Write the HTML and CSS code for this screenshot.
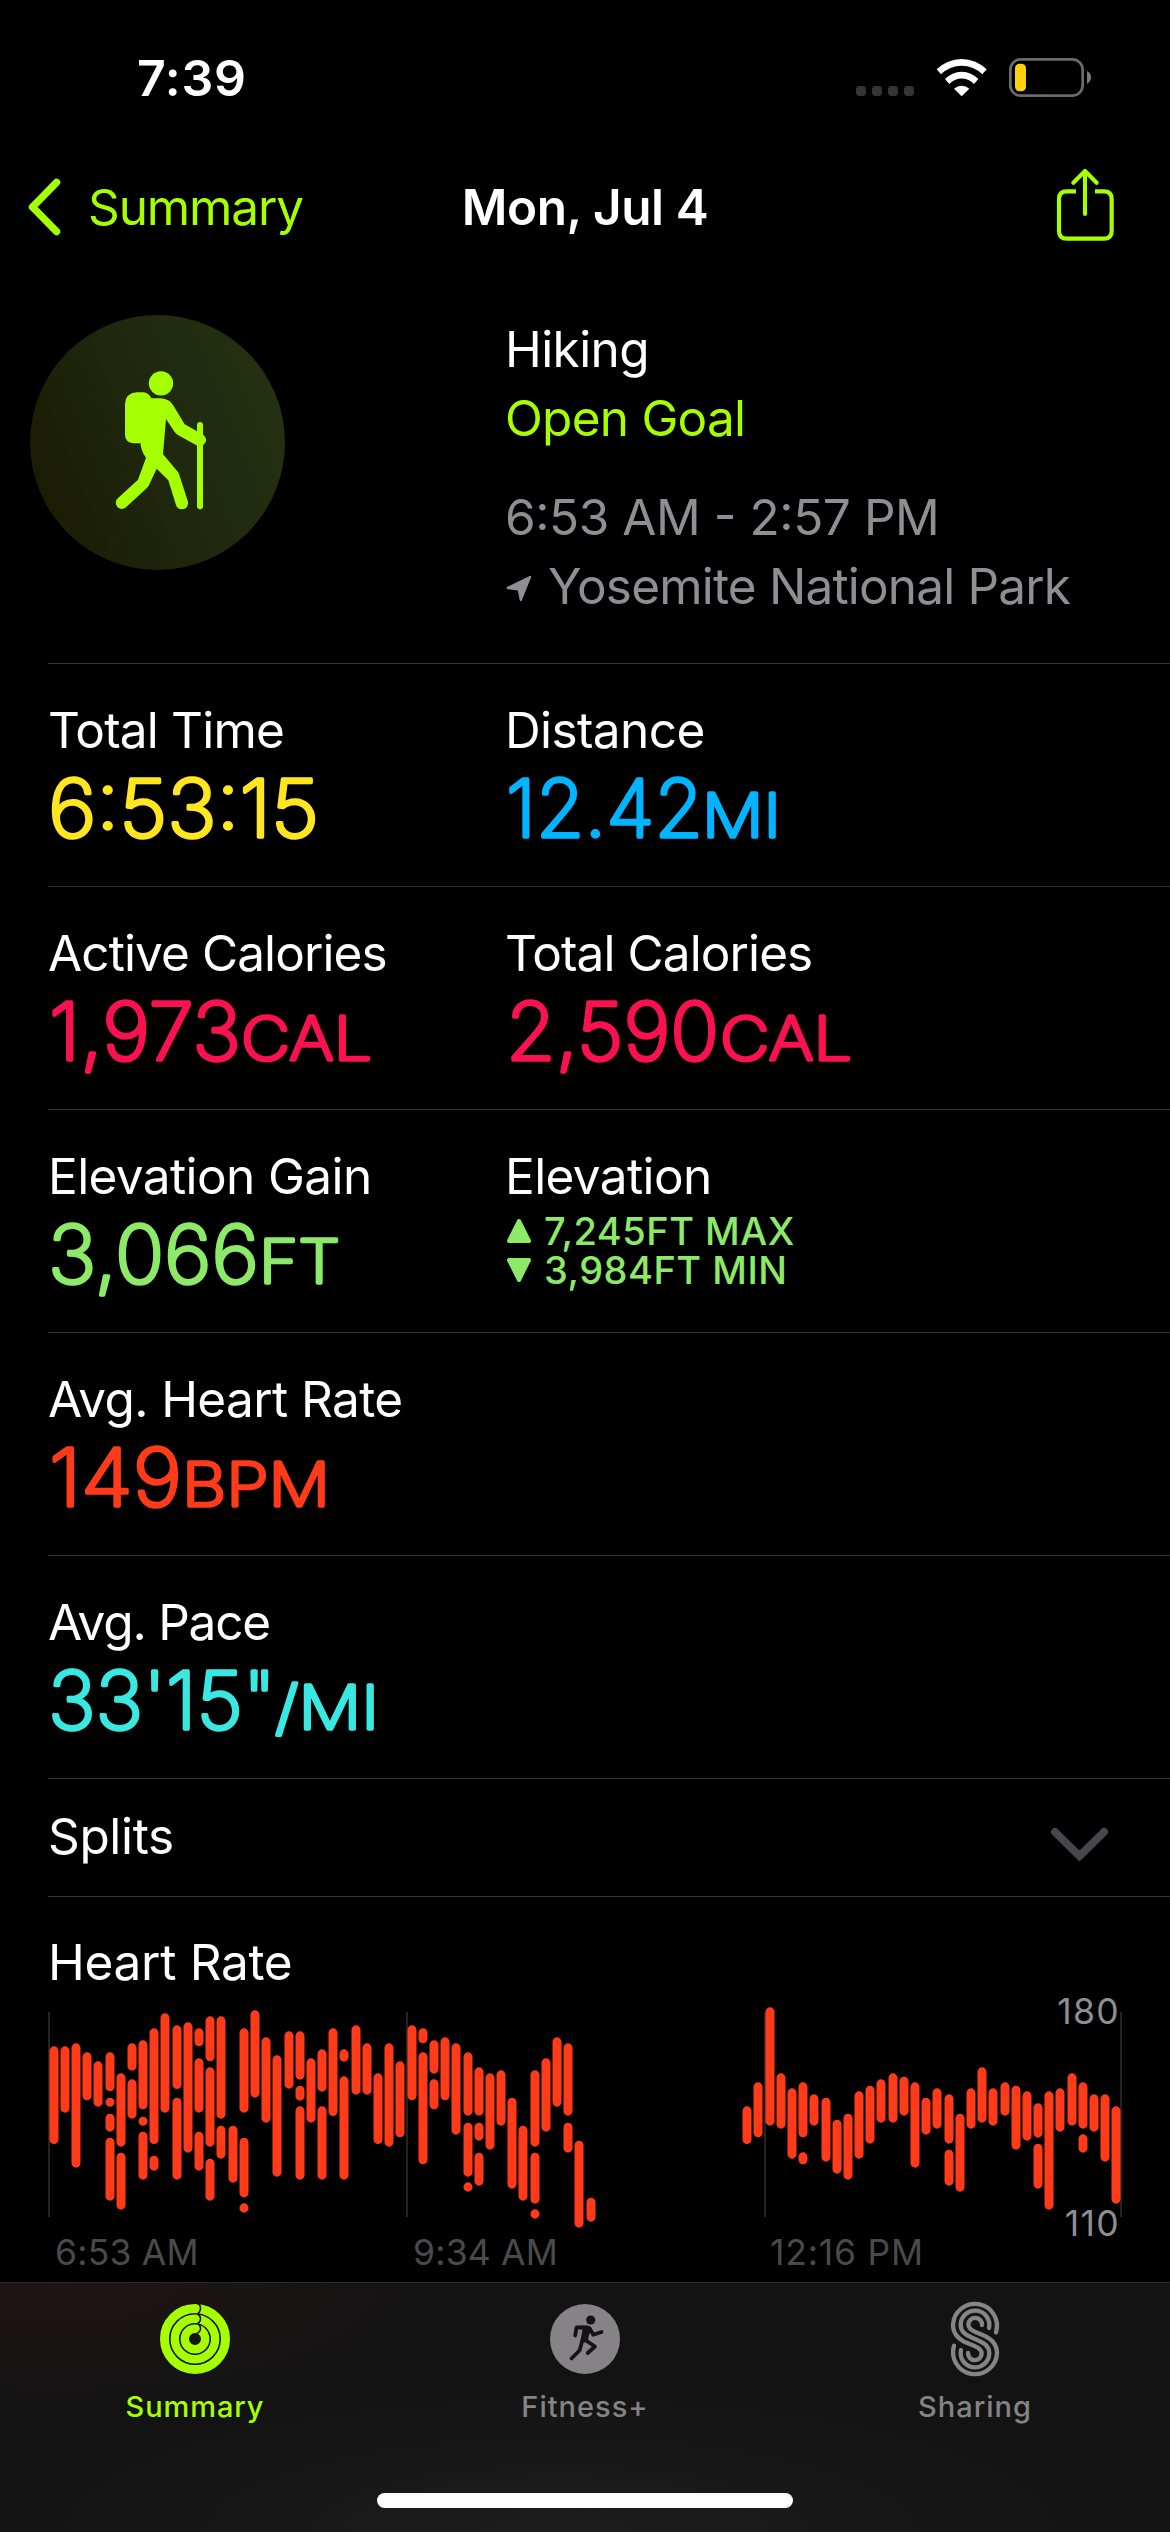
FILE: index.html
```
<!DOCTYPE html>
<html lang="en">
<head>
<meta charset="utf-8">
<title>Hiking workout</title>
<link rel="stylesheet" href="styles.css">
</head>
<body>
<div class="status">
  <span class="time">7:39</span>
  <div class="status-icons">
    <svg class="dots" viewBox="0 0 58 10"><rect width="10" height="10" rx="3.4"/><rect x="16" width="10" height="10" rx="3.4"/><rect x="32" width="10" height="10" rx="3.4"/><rect x="48" width="10" height="10" rx="3.4"/></svg>
    <svg class="wifi" viewBox="288 54 153 117"><path d="M290 88A107 107 0 0 1 440 88L427 103A88 88 0 0 0 303 103ZM315 117A69 69 0 0 1 415 117L402 132A50 50 0 0 0 328 132ZM342 146A34 34 0 0 1 388 146L365 169Z"/></svg>
    <svg class="battery" viewBox="507 54 249 117"><rect class="shell" x="511" y="58" width="217" height="109" rx="31"/><path class="nub" d="M741 93Q753 99 753 112Q753 125 741 131Z"/><rect class="charge" x="525" y="71" width="33" height="83" rx="14"/></svg>
  </div>
</div>

<header class="nav">
  <a class="back"><svg viewBox="0 0 34 58"><path d="M29.500 4.500L5.500 29L29.500 53.500"/></svg><span>Summary</span></a>
  <h1>Mon, Jul 4</h1>
  <svg class="share" viewBox="651 384 171 222"><path d="M708 454H680Q657 454 657 477V573Q657 596 680 596H792Q815 596 815 573V477Q815 454 792 454H765"/><path class="arrow" d="M735 522V393M700 428L735 393L770 428"/></svg>
</header>

<main>
  <section class="hero">
    <svg class="badge" viewBox="90 74 765 765">
      <defs><linearGradient id="olive" x1="0" y1=".7" x2="1" y2=".3"><stop offset="0" stop-color="#1a1b03"/><stop offset=".5" stop-color="#1f280e"/><stop offset="1" stop-color="#253112"/></linearGradient></defs>
      <circle cx="472.500" cy="456.500" r="382.500" fill="url(#olive)"/>
      <g class="hiker">
        <circle cx="483" cy="279" r="36.500"/>
        <path d="M410 306H430Q446 307 454 324V459H400Q376 457 375 434V340Q377 309 410 306Z"/>
        <path d="M440 324H483Q508 326 519 344L554 402L606 431Q622 441 617 455Q608 471 592 466L535 435Q528 431 524 425L498 386L489 492L532 543Q536 547 538 554L564 634Q566 654 547 657Q533 658 528 644L505 570L470 535L446 586Q443 591 438 595L378 651Q365 661 353 651Q343 640 351 626L414 568L438 502Q422 484 421 450Z"/>
        <path class="pole" d="M600 404V648"/>
      </g>
    </svg>
    <div class="facts">
      <p class="kind">Hiking</p>
      <p class="goal">Open Goal</p>
      <p class="when">6:53 AM - 2:57 PM</p>
      <p class="where"><svg viewBox="0 0 26 27"><path d="M24.200 .7Q25.600 .6 25.100 2.200L15.800 25.500Q14.700 27.200 13.700 25.200L11.800 15.400L1.600 14.300Q-.4 13.300 1.200 11.800Z"/></svg><span>Yosemite National Park</span></p>
    </div>
  </section>

  <section class="row">
    <div class="metric yellow"><h2 class="l-tt">Total Time</h2>
      <svg class="value"><text x="0" y="76.500" textLength="271" lengthAdjust="spacingAndGlyphs">6:53:15</text></svg></div>
    <div class="metric blue"><h2 class="l-di">Distance</h2>
      <svg class="value"><text x="1" y="76.500" textLength="197" lengthAdjust="spacingAndGlyphs">12.42</text><text class="unit" x="197" y="76.500" textLength="79" lengthAdjust="spacingAndGlyphs">MI</text></svg></div>
  </section>
  <section class="row">
    <div class="metric pink"><h2 class="l-ca">Active Calories</h2>
      <svg class="value"><text x="1" y="76.500" textLength="192" lengthAdjust="spacingAndGlyphs">1,973</text><text class="unit" x="193" y="76.500" textLength="131" lengthAdjust="spacingAndGlyphs">CAL</text></svg></div>
    <div class="metric pink"><h2 class="l-ca">Total Calories</h2>
      <svg class="value"><text x="1" y="76.500" textLength="213" lengthAdjust="spacingAndGlyphs">2,590</text><text class="unit" x="215" y="76.500" textLength="132" lengthAdjust="spacingAndGlyphs">CAL</text></svg></div>
  </section>
  <section class="row">
    <div class="metric green"><h2 class="l-di">Elevation Gain</h2>
      <svg class="value"><text x="0" y="76.500" textLength="211" lengthAdjust="spacingAndGlyphs">3,066</text><text class="unit" x="211" y="76.500" textLength="81" lengthAdjust="spacingAndGlyphs">FT</text></svg></div>
    <div class="metric green"><h2 class="l-di">Elevation</h2>
      <div class="range">
        <p><svg viewBox="0 0 27 26"><path d="M14 3L24 23H4Z"/></svg>7,245FT MAX</p>
        <p><svg viewBox="0 0 27 26"><path d="M4 3H24L14 23Z"/></svg>3,984FT MIN</p>
      </div></div>
  </section>
  <section class="row">
    <div class="metric red"><h2 class="l-hr">Avg. Heart Rate</h2>
      <svg class="value"><text x="1" y="76.500" textLength="133" lengthAdjust="spacingAndGlyphs">149</text><text class="unit" x="134" y="76.500" textLength="148" lengthAdjust="spacingAndGlyphs">BPM</text></svg></div>
  </section>
  <section class="row">
    <div class="metric teal"><h2 class="l-pa">Avg. Pace</h2>
      <svg class="value"><text x="0" y="76.500" textLength="228" lengthAdjust="spacingAndGlyphs">33'15"</text><text class="unit" x="227" y="76.500" textLength="104" lengthAdjust="spacingAndGlyphs">/MI</text></svg></div>
  </section>

  <section class="splits"><h2>Splits</h2><svg viewBox="0 0 57 34"><path d="M4 4L28.500 28L53 4"/></svg></section>

  <section class="heart">
    <h2>Heart Rate</h2>
    <div class="chart">
      <svg id="chart" viewBox="0 6 3510 720"><path class="grid" d="M147 66V681M1221 66V681M2295 66V681M3363 66V681"/><path class="bars" id="bars"/></svg>
      <span class="max">180</span><span class="min">110</span>
    </div>
    <div class="times"><span>6:53 AM</span><span>9:34 AM</span><span class="noon">12:16 PM</span></div>
  </section>
</main>

<footer class="tabbar">
  <nav class="tabs">
    <a class="tab active">
      <svg viewBox="-40 -40 80 80"><g class="rings"><circle r="30.500" stroke-width="9"/><circle r="20.200" stroke-width="8.400"/><circle r="10.200" stroke-width="8.400"/></g>
        <path class="cuts" d="M1.500 -36Q5.500 -34.500 5.500 -31Q5.500 -27 2.500 -25Q5.500 -23.500 5.500 -20.200Q5.500 -17 2.500 -15.300Q5.500 -13.500 5.500 -10.500Q5.500 -7 1.500 -5.500"/></svg>
      <span>Summary</span></a>
    <a class="tab">
      <svg viewBox="-40 -40 80 80"><circle class="disc" r="35"/>
        <g class="runner"><circle cx="5.700" cy="-19" r="4.600"/><path d="M-6.500 -13.300H2Q5.500 -13 6.500 -10L4 -4L2.500 3L-5 4L-2.500 -9.500Z"/>
        <path class="limb" d="M-9.800 -3.500L-8.500 -11.500H1.500Q4.500 -11.500 5.500 -9L8.300 -4.300L16.500 -7"/><path class="limb" d="M1 1.500L10 7.500L2.700 14"/><path class="limb" d="M-2.500 1L-5.500 11.500L-13.500 19.500"/></g></svg>
      <span class="fit">Fitness+</span></a>
    <a class="tab">
      <svg viewBox="223 88 240 240"><path class="ess" d="M406 188A66 66 0 1 0 277 165C277 195 295 210 320 220L340 228C355 234 363 241 363 252A20.500 20.500 0 0 1 322 250M385 175A43 43 0 1 0 300 165C300 187 315 196 343 208C371 220 386 229 386 251A43 43 0 1 1 301 241M280 228A66 66 0 1 0 409 251C409 221 391 206 366 196L346 188C331 182 323 175 323 164A20.500 20.500 0 0 1 364 166"/></svg>
      <span class="fit">Sharing</span></a>
  </nav>
  <div class="home"></div>
</footer>
<script src="chart.js"></script>
</body>
</html>
```
FILE: styles.css
```
* { box-sizing: border-box; margin: 0; padding: 0; }
body { width: 1170px; height: 2532px; background: #000; color: #fff; font-family: Inter, "Liberation Sans", sans-serif; font-size: 49.5px; line-height: 60px; overflow: hidden; }
h1, h2 { font-size: inherit; font-weight: 400; }
svg { display: block; flex: none; overflow: visible; }

.status { display: flex; justify-content: space-between; height: 156px; padding: 48px 78px 0 137px; }
.time { font-size: 50px; font-weight: 600; letter-spacing: .7px; }
.status-icons { display: flex; align-items: flex-end; gap: 22px; height: 49px; }
.dots { width: 58px; height: 10px; margin-bottom: 1px; fill: #353535; }
.wifi { width: 51px; height: 39px; fill: #fff; }
.battery { width: 83px; height: 39px; }
.shell { fill: none; stroke: #6b6b6b; stroke-width: 8; }
.nub { fill: #7a7a7a; }
.charge { fill: #ffd10a; }

.nav { display: grid; grid-template-columns: 1fr auto 1fr; align-items: center; height: 102px; padding: 0 56px 0 27px; }
.back { display: flex; align-items: center; gap: 27px; color: #a6ff00; letter-spacing: -1.1px; }
.back svg { width: 34px; height: 58px; fill: none; stroke: #a6ff00; stroke-width: 7.5; stroke-linecap: round; stroke-linejoin: round; }
.nav h1 { font-weight: 600; letter-spacing: -.42px; margin-left: 29px; }
.share { width: 57px; height: 74px; margin-top: -4px; justify-self: end; fill: none; stroke: #a6ff00; stroke-width: 12.5; }
.arrow { stroke-linecap: round; stroke-linejoin: round; }

.hero { display: flex; height: 406px; padding: 57px 0 0 30px; position: relative; }
.hero::after, .row::after, .splits::after { content: ""; position: absolute; left: 48px; right: 0; bottom: 0; height: 1px; background: #343436; }
.badge { width: 255px; height: 255px; }
.hiker { fill: #a6ff00; }
.pole { stroke: #a6ff00; stroke-width: 18; stroke-linecap: round; }
.facts { margin-left: 220px; line-height: 69px; color: #8e8e93; }
.kind { color: #fff; letter-spacing: -.6px; }
.goal { color: #a6ff00; letter-spacing: -.76px; }
.when { margin-top: 30px; letter-spacing: -.44px; font-feature-settings: "case"; }
.where { display: flex; align-items: center; letter-spacing: -.82px; }
.where svg { width: 26px; height: 27px; margin: 4px 16px 0 1px; fill: #8e8e93; }

.row { display: grid; grid-template-columns: 457px 1fr; height: 223px; padding: 36px 0 0 48px; position: relative; }
.row h2 { color: #fff; }
.l-tt { letter-spacing: -.8px; }
.l-di { letter-spacing: -.6px; }
.l-ca { letter-spacing: -.9px; }
.l-hr { letter-spacing: -.6px; }
.l-pa { letter-spacing: -1.2px; }
.value { width: 400px; height: 90px; }
.value text { font-size: 80px; font-weight: 230; fill: currentColor; stroke: currentColor; stroke-width: 3.5px; stroke-linejoin: round; }
.value .unit { font-size: 60px; font-weight: 240; }
.yellow { color: #ffe620; }
.blue { color: #00b4ff; }
.pink { color: #fa114f; }
.green { color: #8de968; }
.red { color: #ff3b1a; }
.teal { color: #38e8e1; }
.range { margin-top: 6px; font-size: 38px; font-weight: 450; line-height: 38.5px; letter-spacing: .5px; }
.range p { display: flex; align-items: center; gap: 12px; }
.range svg { width: 27px; height: 26px; fill: currentColor; stroke: currentColor; stroke-width: 4; stroke-linejoin: round; }

.splits { display: flex; justify-content: space-between; align-items: flex-start; height: 118px; padding: 27px 62px 0 48px; letter-spacing: -.35px; position: relative; }
.splits svg { width: 57px; height: 34px; margin-top: 22px; fill: none; stroke: #48484a; stroke-width: 8; stroke-linecap: round; }

.heart h2 { padding: 35px 0 0 48px; letter-spacing: -.3px; }
.chart { position: relative; height: 240px; }
.chart svg { width: 1170px; height: 240px; fill: none; }
.grid { stroke: #2c2c2e; stroke-width: 5; }
.bars { stroke: #ff3b1a; stroke-width: 27; stroke-linecap: round; }
.max, .min { position: absolute; right: 50px; font-size: 35.5px; line-height: 40px; letter-spacing: 1.3px; color: #8e8e93; }
.max { top: 0; }
.min { top: 212px; }
.times { display: grid; grid-template-columns: 358px 357px 1fr; padding: 1px 0 0 55px; font-size: 35.5px; line-height: 40px; letter-spacing: .2px; color: #4a4a4c; }
.noon { letter-spacing: .8px; }

.tabbar { position: absolute; left: 0; top: 2282px; width: 1170px; height: 250px; border-top: 1px solid #2b2a2b; background: radial-gradient(ellipse 360px 120px at 60px 0, #1e1614, transparent), radial-gradient(ellipse 560px 150px at 560px 250px, #1e1d1e, transparent), #141314; }
.tabs { display: grid; grid-template-columns: repeat(3, 1fr); padding-top: 16px; }
.tab { display: flex; flex-direction: column; align-items: center; gap: 10px; color: #858385; font-size: 29px; font-weight: 500; line-height: 36px; letter-spacing: .9px; }
.tab svg { width: 80px; height: 80px; }
.active { color: #a6ff00; }
.fit { letter-spacing: 1px; }
.rings { fill: none; stroke: #a6ff00; }
.cuts { fill: none; stroke: #171413; stroke-width: 1.5; }
.disc { fill: #858385; }
.runner { fill: #151415; }
.limb { fill: none; stroke: #151415; stroke-width: 3.8; stroke-linecap: round; stroke-linejoin: round; }
.ess { fill: none; stroke: #858585; stroke-width: 13; stroke-linecap: round; }
.home { width: 416px; height: 15px; margin: 68px auto 0; border-radius: 8px; background: #fff; }
```
FILE: chart.js
```
// Heart rate samples: [x, top, bottom, top, bottom, ...] in chart units.
const samples = [
  [162,169,462],[195,169,368],[228,160,533],[261,187,331],[294,214,350],
  [330,187,304,323,350,371,425,443,632],[363,250,470,488,659],[396,160,242,268,386],
  [429,151,358,380,406,425,569],[462,115,462,497,542],[495,70,368],[531,106,297,323,569],
  [564,97,488],[597,115,169,205,368,425,542],[630,79,214,232,470,506,632],[663,79,386,407,506],
  [699,407,578],[732,115,368,443,622,640,668],[765,61,323],[798,142,398],[831,196,560],
  [867,124,296],[900,124,269,287,332,349,569],[933,205,398],[966,178,305,349,569],
  [999,115,378],[1032,178,215,259,569],[1068,106,314],[1101,160,314],[1134,250,462],
  [1167,160,470],[1200,214,442],[1236,106,331],[1269,115,160,187,523],[1302,151,251,268,358],
  [1335,142,331],[1368,160,434],[1404,187,377,398,560,577,605],[1437,232,377,398,452,488,587],
  [1470,250,479],[1503,241,407],[1536,323,596],[1569,407,632],[1605,241,470,488,641,658,686],
  [1638,205,425],[1671,142,350],[1704,160,377,398,488],[1737,452,713],[1773,623,695],
  [2241,349,462],[2274,277,442],[2310,52,407],[2343,250,416],[2376,295,506],[2409,277,442,487,523],
  [2442,313,407],[2478,323,515],[2511,389,551],[2544,371,569],[2577,304,506],[2610,287,461],
  [2643,268,398],[2679,250,398],[2712,260,377],[2745,277,533],[2778,323,434],[2811,295,416],
  [2847,313,461,479,587],[2880,371,605],[2913,295,416],[2946,232,398],[2979,295,407],
  [3015,277,377],[3048,287,479],[3081,304,452],[3114,340,443,461,596],[3147,304,659],
  [3180,295,425],[3216,250,407],[3249,277,416,433,488],[3282,313,425],[3315,313,515],[3348,349,641]
];

const cap = 13.5;
let d = "";
for (const [x, ...ends] of samples) {
  for (let i = 0; i < ends.length; i += 2) {
    const top = ends[i] + cap;
    d += `M${x} ${top}V${Math.max(top + 0.1, ends[i + 1] - cap)}`;
  }
}
document.getElementById("bars").setAttribute("d", d);
```
